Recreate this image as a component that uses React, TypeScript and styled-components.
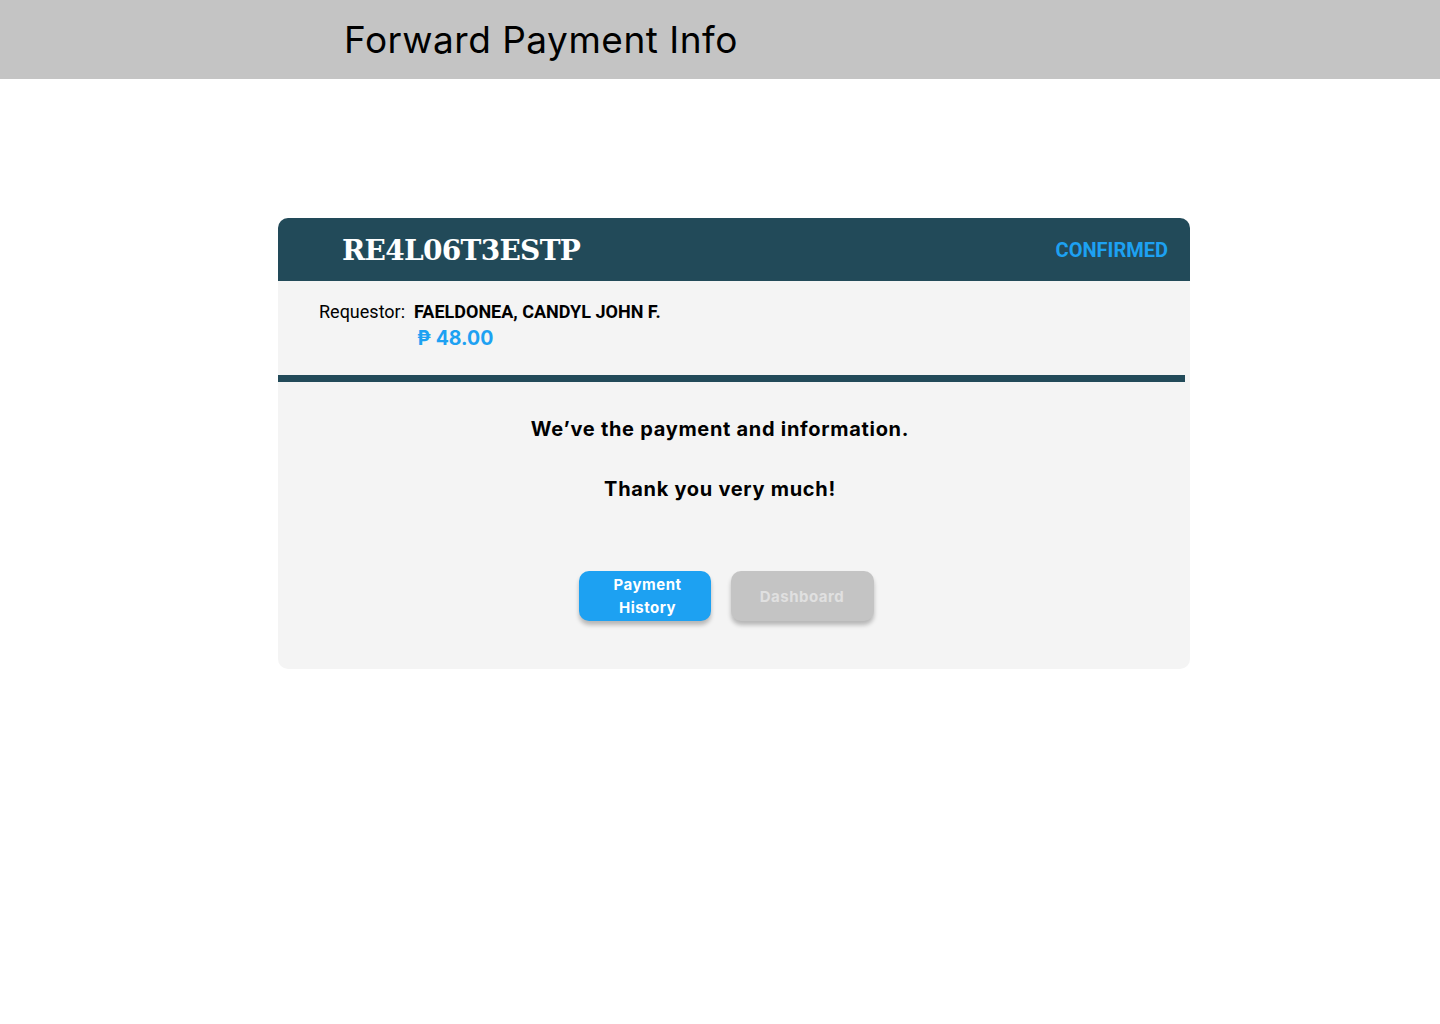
import React from 'react';
import styled, { createGlobalStyle } from 'styled-components';

const GlobalStyle = createGlobalStyle`
  body {
    margin: 0;
    background: #ffffff;
    font-family: 'Inter', 'Noto Sans', sans-serif;
  }
`;

const TopBar = styled.header`
  height: 79px;
  background-color: #c4c4c4;
  display: flex;
  align-items: center;
  padding-left: 344px;
  box-sizing: border-box;
`;

const PageTitle = styled.h1`
  margin: 0;
  font-family: 'Inter', sans-serif;
  font-weight: 400;
  font-size: 37px;
  letter-spacing: 0.5px;
  color: #000;
`;

const Card = styled.section`
  margin: 139px 0 0 278px;
  width: 912px;
  border-radius: 10px;
  background-color: #f4f4f4;
  overflow: hidden;
`;

const CardHeader = styled.div`
  height: 63px;
  background-color: #224a59;
  display: flex;
  align-items: center;
  justify-content: space-between;
  padding: 0 22px 0 64px;
`;

const RefCode = styled.div`
  font-family: 'DejaVu Serif', serif;
  font-weight: 700;
  font-size: 28px;
  letter-spacing: -0.7px;
  line-height: 34px;
  padding-top: 3px;
  color: #ffffff;
`;

const Status = styled.div`
  font-family: 'Roboto', sans-serif;
  font-weight: 700;
  font-size: 20px;
  color: #1da1f2;
`;

const InfoSection = styled.div`
  height: 94px;
  box-sizing: border-box;
  padding: 19px 0 0 41px;
  display: grid;
  grid-template-columns: auto 1fr;
  column-gap: 9px;
  align-content: start;
`;

const Label = styled.span`
  font-family: 'Roboto', sans-serif;
  font-size: 18px;
  line-height: 24px;
  color: #000;
`;

const Name = styled.span`
  font-family: 'Roboto', sans-serif;
  font-weight: 700;
  font-size: 18px;
  line-height: 24px;
  color: #000;
`;

const Amount = styled.span`
  grid-column: 2;
  font-family: 'Inter', sans-serif;
  font-weight: 700;
  font-size: 19.5px;
  line-height: 28px;
  padding-left: 3px;
  color: #1da1f2;
`;

const Divider = styled.div`
  height: 7px;
  width: 907px;
  background-color: #224a59;
`;

const Body = styled.div`
  padding: 32px 28px 48px 0;
  display: flex;
  flex-direction: column;
  align-items: center;
`;

const Message = styled.p`
  margin: 0;
  font-family: 'Inter', sans-serif;
  font-weight: 700;
  font-size: 20px;
  letter-spacing: 0.7px;
  line-height: 30px;
  color: #000;
  & + & {
    margin-top: 30px;
  }
`;

const Actions = styled.div`
  display: flex;
  gap: 20px;
  margin: 67px 0 0 12px;
`;

const ActionButton = styled.button<{ $variant: 'primary' | 'muted' }>`
  height: 50px;
  width: ${(p) => (p.$variant === 'primary' ? '132px' : '143px')};
  border: none;
  border-radius: 10px;
  background-color: ${(p) => (p.$variant === 'primary' ? '#1da1f2' : '#c4c4c4')};
  color: ${(p) => (p.$variant === 'primary' ? '#ffffff' : '#e0e0e0')};
  font-family: 'Inter', sans-serif;
  font-weight: 700;
  font-size: 15px;
  letter-spacing: 0.5px;
  line-height: 23px;
  box-shadow: 0 4px 4px rgba(0, 0, 0, 0.25);
  cursor: pointer;
  padding: ${(p) => (p.$variant === 'primary' ? '0 18px 0 24px' : '0 20px')};
`;

const App: React.FC = () => {
  return (
    <>
      <GlobalStyle />
      <TopBar>
        <PageTitle>Forward Payment Info</PageTitle>
      </TopBar>
      <Card>
        <CardHeader>
          <RefCode>RE4L06T3ESTP</RefCode>
          <Status>CONFIRMED</Status>
        </CardHeader>
        <InfoSection>
          <Label>Requestor:</Label>
          <Name>FAELDONEA, CANDYL JOHN F.</Name>
          <Amount>₱ 48.00</Amount>
        </InfoSection>
        <Divider />
        <Body>
          <Message>We’ve the payment and information.</Message>
          <Message>Thank you very much!</Message>
          <Actions>
            <ActionButton $variant="primary">Payment History</ActionButton>
            <ActionButton $variant="muted">Dashboard</ActionButton>
          </Actions>
        </Body>
      </Card>
    </>
  );
};

export default App;
